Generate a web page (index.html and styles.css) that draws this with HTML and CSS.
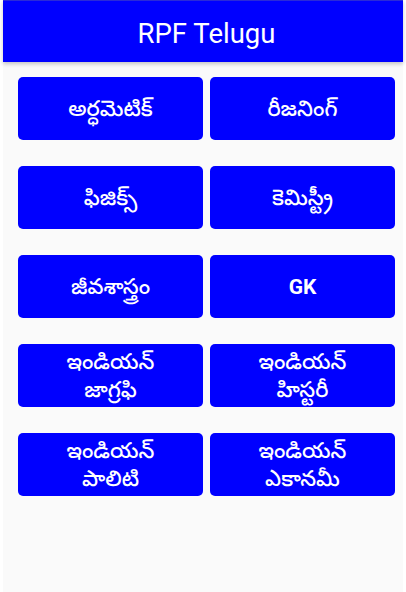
FILE: index.html
```html
<!DOCTYPE html>
<html>
<head>
<meta charset="utf-8">
<link rel="stylesheet" href="styles.css">
</head>
<body>
<div class="screen">
  <header class="appbar"><h1 class="title">RPF Telugu</h1></header>
  <main class="grid">
    <button class="tile">అర్ధమెటిక్</button>
    <button class="tile">రీజనింగ్</button>
    <button class="tile">ఫిజిక్స్</button>
    <button class="tile">కెమిస్ట్రీ</button>
    <button class="tile">జీవశాస్త్రం</button>
    <button class="tile gk">GK</button>
    <button class="tile">ఇండియన్<br>జాగ్రఫి</button>
    <button class="tile">ఇండియన్<br>హిస్టరీ</button>
    <button class="tile">ఇండియన్<br>పాలిటి</button>
    <button class="tile">ఇండియన్<br>ఎకానమీ</button>
  </main>
</div>
</body>
</html>
```
FILE: styles.css
```css
html, body {
  margin: 0;
  padding: 0;
  background: #ffffff;
  height: 100%;
}
.screen {
  margin: 0 3px;
  min-height: 592px;
  background: #fafafa;
  font-family: Roboto, "Noto Sans", "Noto Sans Telugu", sans-serif;
}
.appbar {
  height: 62px;
  background: #0000ff;
  border-top: 1px solid #2a2ad8;
  box-sizing: border-box;
  display: flex;
  align-items: center;
  justify-content: center;
  box-shadow: 0 2px 4px rgba(0,0,0,0.22);
  position: relative;
}
.title {
  margin: 0;
  color: #ffffff;
  font-size: 27.5px;
  font-weight: 400;
  padding-top: 3px;
  padding-left: 7px;
}
.grid {
  display: grid;
  grid-template-columns: 185px 185px;
  grid-auto-rows: 63px;
  column-gap: 7px;
  row-gap: 26px;
  padding: 15px 0 0 15px;
}
.tile {
  background: #0000ff;
  color: #ffffff;
  border: none;
  border-radius: 5px;
  font-family: Roboto, "Noto Sans", "Noto Sans Telugu", sans-serif;
  font-size: 22px;
  font-weight: 500;
  line-height: 28px;
  padding: 0;
  display: flex;
  align-items: center;
  justify-content: center;
  text-align: center;
}
.gk {
  font-weight: 700;
  font-size: 21px;
}
```
